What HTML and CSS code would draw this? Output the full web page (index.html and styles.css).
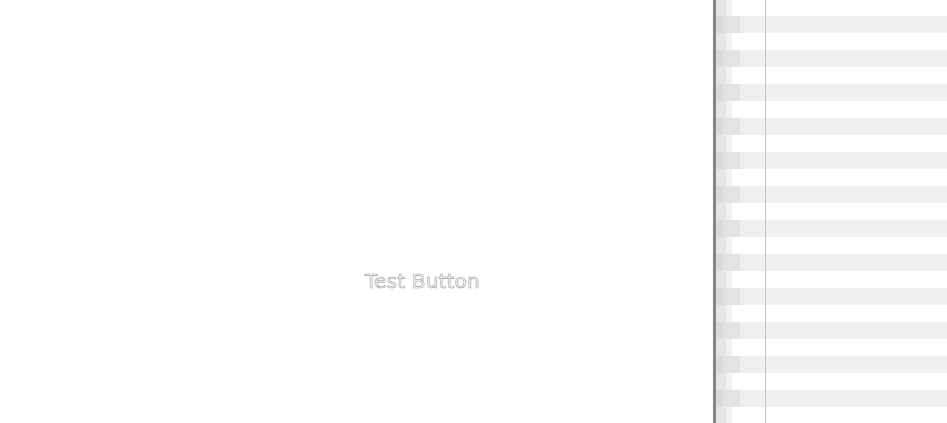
FILE: index.html
```html
<!DOCTYPE html>
<html>
<head>
<meta charset="utf-8">
<link rel="stylesheet" href="styles.css">
</head>
<body>
<div class="app">
  <main class="stage">
    <span class="test-button">Test Button</span>
  </main>
  <aside class="panel">
    <div class="row"><i class="c1"></i><i class="c2"></i><i class="c3"></i><i class="c4"></i><i class="c5"></i></div>
    <div class="row"><i class="c1"></i><i class="c2"></i><i class="c3"></i><i class="c4"></i><i class="c5"></i></div>
    <div class="row"><i class="c1"></i><i class="c2"></i><i class="c3"></i><i class="c4"></i><i class="c5"></i></div>
    <div class="row"><i class="c1"></i><i class="c2"></i><i class="c3"></i><i class="c4"></i><i class="c5"></i></div>
    <div class="row"><i class="c1"></i><i class="c2"></i><i class="c3"></i><i class="c4"></i><i class="c5"></i></div>
    <div class="row"><i class="c1"></i><i class="c2"></i><i class="c3"></i><i class="c4"></i><i class="c5"></i></div>
    <div class="row"><i class="c1"></i><i class="c2"></i><i class="c3"></i><i class="c4"></i><i class="c5"></i></div>
    <div class="row"><i class="c1"></i><i class="c2"></i><i class="c3"></i><i class="c4"></i><i class="c5"></i></div>
    <div class="row"><i class="c1"></i><i class="c2"></i><i class="c3"></i><i class="c4"></i><i class="c5"></i></div>
    <div class="row"><i class="c1"></i><i class="c2"></i><i class="c3"></i><i class="c4"></i><i class="c5"></i></div>
    <div class="row"><i class="c1"></i><i class="c2"></i><i class="c3"></i><i class="c4"></i><i class="c5"></i></div>
    <div class="row"><i class="c1"></i><i class="c2"></i><i class="c3"></i><i class="c4"></i><i class="c5"></i></div>
    <div class="row"><i class="c1"></i><i class="c2"></i><i class="c3"></i><i class="c4"></i><i class="c5"></i></div>
    <div class="row"><i class="c1"></i><i class="c2"></i><i class="c3"></i><i class="c4"></i><i class="c5"></i></div>
    <div class="row"><i class="c1"></i><i class="c2"></i><i class="c3"></i><i class="c4"></i><i class="c5"></i></div>
    <div class="row"><i class="c1"></i><i class="c2"></i><i class="c3"></i><i class="c4"></i><i class="c5"></i></div>
    <div class="row"><i class="c1"></i><i class="c2"></i><i class="c3"></i><i class="c4"></i><i class="c5"></i></div>
    <div class="row"><i class="c1"></i><i class="c2"></i><i class="c3"></i><i class="c4"></i><i class="c5"></i></div>
    <div class="row"><i class="c1"></i><i class="c2"></i><i class="c3"></i><i class="c4"></i><i class="c5"></i></div>
    <div class="row"><i class="c1"></i><i class="c2"></i><i class="c3"></i><i class="c4"></i><i class="c5"></i></div>
    <div class="row"><i class="c1"></i><i class="c2"></i><i class="c3"></i><i class="c4"></i><i class="c5"></i></div>
    <div class="row"><i class="c1"></i><i class="c2"></i><i class="c3"></i><i class="c4"></i><i class="c5"></i></div>
    <div class="row"><i class="c1"></i><i class="c2"></i><i class="c3"></i><i class="c4"></i><i class="c5"></i></div>
    <div class="row"><i class="c1"></i><i class="c2"></i><i class="c3"></i><i class="c4"></i><i class="c5"></i></div>
    <div class="row"><i class="c1"></i><i class="c2"></i><i class="c3"></i><i class="c4"></i><i class="c5"></i></div>
    <div class="row"><i class="c1"></i><i class="c2"></i><i class="c3"></i><i class="c4"></i><i class="c5"></i></div>
  </aside>
</div>
</body>
</html>
```
FILE: styles.css
```css
html, body {
  margin: 0;
  padding: 0;
  background: #fff;
  overflow: hidden;
}
.app {
  display: flex;
  width: 947px;
  height: 423px;
}
.stage {
  width: 713px;
  flex: none;
  box-sizing: border-box;
  padding: 269px 0 0 365px;
}
.test-button {
  font-family: "DejaVu Sans", sans-serif;
  font-size: 20px;
  line-height: 24px;
  letter-spacing: 0.2px;
  color: #fff;
  -webkit-text-stroke: 0.6px #999;
}
.panel {
  flex: 1;
  border-left: 3px solid #858585;
  display: flex;
  flex-direction: column;
  overflow: hidden;
}
.row {
  display: flex;
  height: 17px;
  flex: none;
}
.row:first-child {
  height: 16px;
}
.row i {
  display: block;
  height: 100%;
}
.c1 { width: 7px; background: #e6e6e6; }
.c2 { width: 3px; background: #e6e6e6; }
.c3 { width: 6px; background: #f1f1f1; }
.c4 { width: 33px; background: #fff; border-right: 1px solid #c2c2c2; }
.c5 { flex: 1; background: #fff; }
.row:nth-child(even) .c1 { background: #dadada; }
.row:nth-child(even) .c2 { background: #e3e3e3; }
.row:nth-child(even) .c3 { width: 14px; background: #e3e3e3; }
.row:nth-child(even) .c4 { width: 25px; background: #efefef; }
.row:nth-child(even) .c5 { background: #f0f0f0; }
```
